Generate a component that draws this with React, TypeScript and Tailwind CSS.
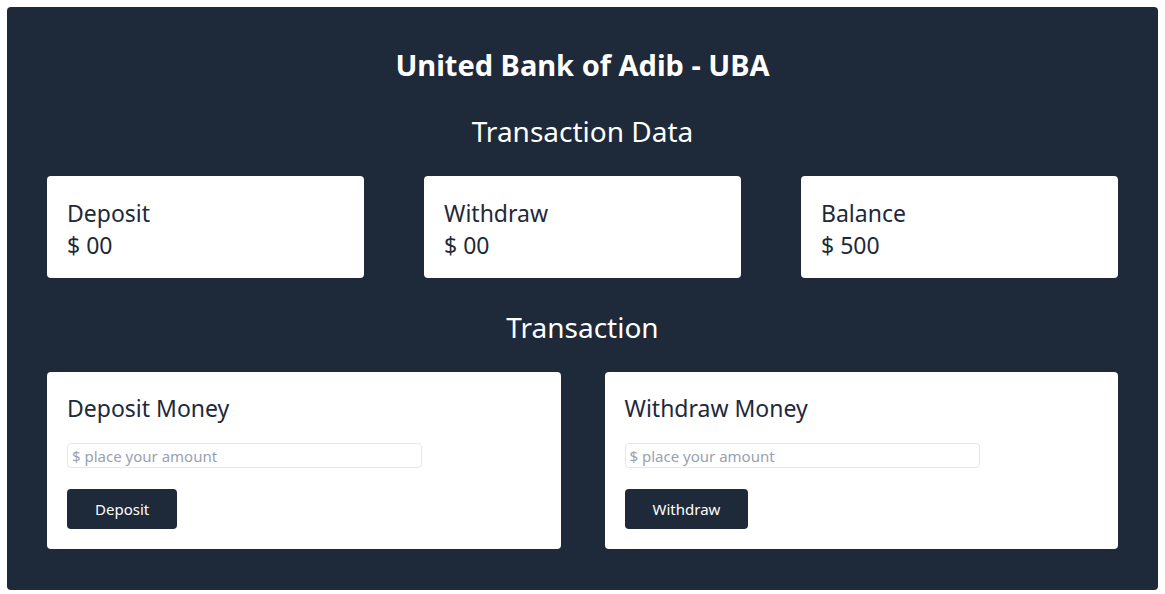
import React from "react";

const font = "font-['Segoe_UI','Noto_Sans',sans-serif]";

const StatCard = ({ label, value }: { label: string; value: string }) => {
  return (
    <div className="bg-white rounded px-5 pt-[21px] pb-[17px] text-[23px] leading-8 text-gray-800">
      <p>{label}</p>
      <p>$ {value}</p>
    </div>
  );
};

const MoneyCard = ({ title, button }: { title: string; button: string }) => {
  return (
    <div className="bg-white rounded p-5">
      <h3 className="text-[23px] leading-8 text-gray-800">{title}</h3>
      <input
        type="text"
        placeholder="$ place your amount"
        className="mt-[19px] block w-3/4 h-[25px] border border-gray-200 rounded px-1 text-[15px] placeholder:text-gray-400 outline-none"
      />
      <button className="mt-[21px] block bg-gray-800 text-white rounded px-7 h-10 text-[15px]">
        {button}
      </button>
    </div>
  );
};

const App = () => {
  return (
    <div className={`p-[7px] bg-white ${font}`}>
      <div className="bg-gray-800 rounded px-10 pt-10 pb-[41px]">
        <h1 className="text-center text-[29px] leading-9 font-bold text-white">
          United Bank of Adib - UBA
        </h1>
        <h2 className="mt-[30px] text-center text-[28px] leading-9 text-white">Transaction Data</h2>

        {/* summary */}
        <div className="mt-[27px] grid grid-cols-3 gap-[60px]">
          <StatCard label="Deposit" value="00" />
          <StatCard label="Withdraw" value="00" />
          <StatCard label="Balance" value="500" />
        </div>

        <h2 className="mt-[31px] text-center text-[28px] leading-9 text-white">Transaction</h2>

        {/* forms */}
        <div className="mt-[27px] grid grid-cols-2 gap-11">
          <MoneyCard title="Deposit Money" button="Deposit" />
          <MoneyCard title="Withdraw Money" button="Withdraw" />
        </div>
      </div>
    </div>
  );
};

export default App;
